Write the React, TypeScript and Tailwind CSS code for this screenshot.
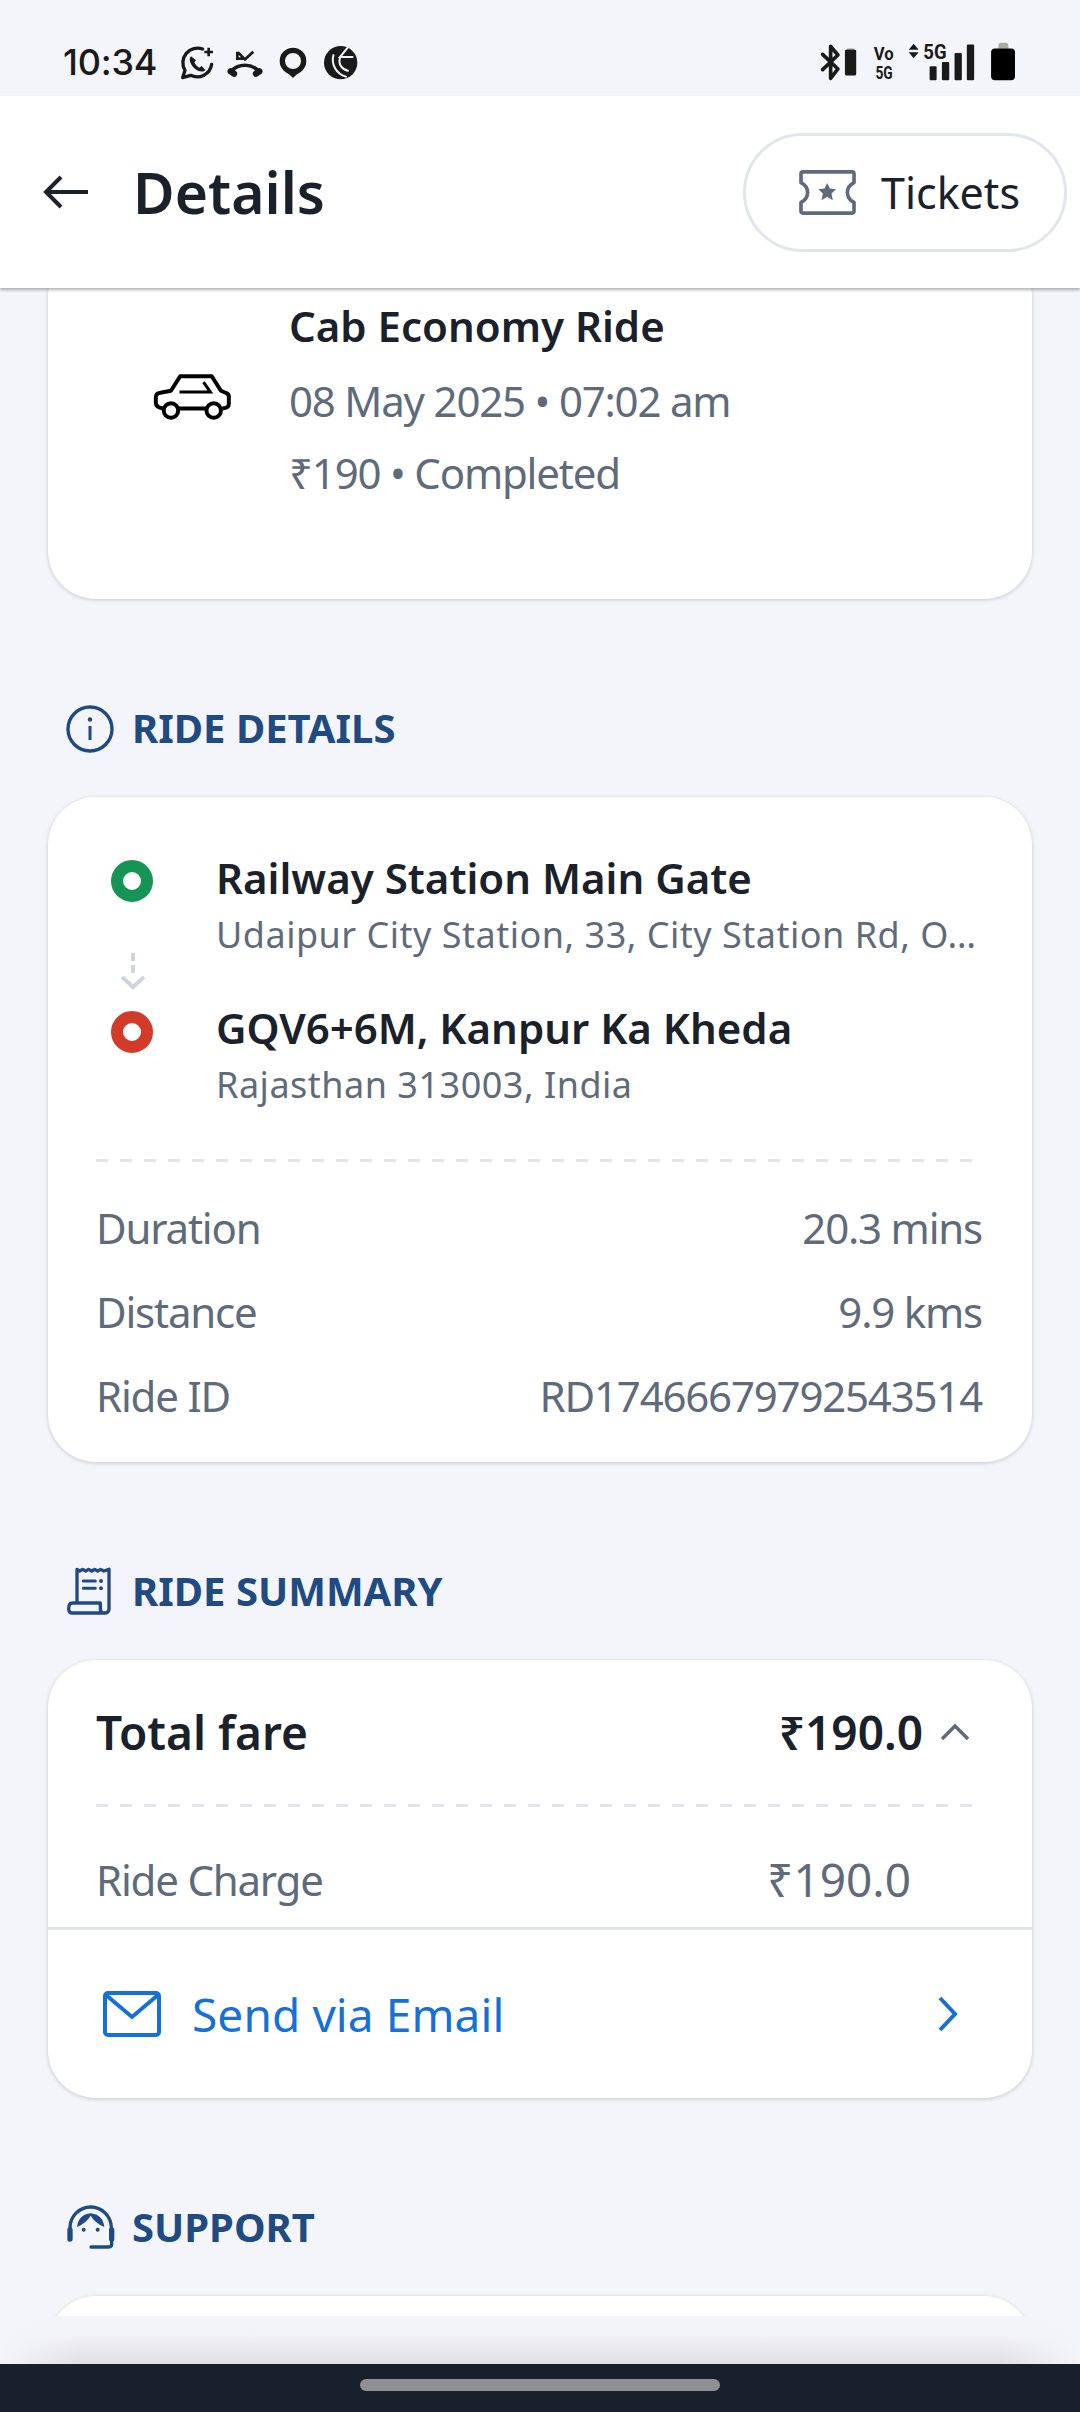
const NAVY = "#1f4b82";

function NotificationIcons() {
    return (
        <svg width="184" height="42" viewBox="420 60 552 126" fill="none" className="ml-[21px]">
            {/* whatsapp with plus */}
            <path d="M494 84A44 44 0 0 0 441 148L434 170L458 163A44 44 0 0 0 521 130" stroke="#1a1a1a" strokeWidth="10" strokeLinecap="round" strokeLinejoin="round" />
            <path d="M459 106C452 112 455 128 468 141C481 153 496 155 502 147L491 135L484 140C478 137 472 131 469 124L474 118Z" fill="#1a1a1a" />
            <path d="M512 80V106M499 93H525" stroke="#1a1a1a" strokeWidth="8" />
            {/* missed call */}
            <path d="M580 150C602 127 640 127 662 150" stroke="#1a1a1a" strokeWidth="11" />
            <path d="M578 151L588 158M664 151L654 158" stroke="#1a1a1a" strokeWidth="19" strokeLinecap="round" />
            <path d="M598 92V113H618M600 94L621 115L646 92" stroke="#1a1a1a" strokeWidth="8" />
            {/* pin */}
            <circle cx="765" cy="120" r="32" stroke="#1a1a1a" strokeWidth="16" />
            <path d="M738 145L765 171L792 145Z" fill="#1a1a1a" />
            {/* round badge */}
            <circle cx="908" cy="125" r="50" fill="#1a1a1a" />
            <path d="M932 76L906 108H946M887 100C878 128 893 158 926 168M906 110C900 130 912 146 932 150" stroke="#f4f4fb" strokeWidth="6" />
        </svg>
    );
}

function SystemIcons() {
    return (
        <svg width="196" height="42" viewBox="55 62 590 126" fill="none">
            {/* bluetooth */}
            <path d="M66 102L112 146L90 174V78L112 104L66 148" stroke="#1a1a1a" strokeWidth="11" strokeLinecap="round" strokeLinejoin="round" />
            <path d="M140 87H160V84H140Z" fill="#a8a8a8" />
            <rect x="133" y="87" width="34" height="79" rx="5" fill="#1a1a1a" />
            <text x="220" y="120" fontFamily="Roboto, sans-serif" fontWeight="700" fontSize="56" fill="#1a1a1a" textLength="60" lengthAdjust="spacingAndGlyphs">Vo</text>
            <text x="225" y="175" fontFamily="Roboto, sans-serif" fontWeight="700" fontSize="56" fill="#1a1a1a" textLength="52" lengthAdjust="spacingAndGlyphs">5G</text>
            <path d="M340 70L355 88H325ZM340 114L355 96H325Z" fill="#1a1a1a" />
            <text x="369" y="115" fontFamily="Roboto, sans-serif" fontWeight="700" fontSize="62" fill="#1a1a1a" textLength="70" lengthAdjust="spacingAndGlyphs">5G</text>
            <rect x="388" y="138" width="21" height="42" rx="3" fill="#1a1a1a" />
            <rect x="425" y="125" width="22" height="55" rx="3" fill="#1a1a1a" />
            <rect x="463" y="98" width="22" height="82" rx="3" fill="#1a1a1a" />
            <rect x="500" y="72" width="22" height="108" rx="3" fill="#1a1a1a" />
            <path d="M595 85V76Q595 67 604 67H616Q625 67 625 76V85Z" fill="#a8a8a8" />
            <rect x="573" y="84" width="72" height="96" rx="12" fill="#000000" />
        </svg>
    );
}

function TicketIcon() {
    return (
        <svg width="61" height="49" viewBox="80 52 184 146" fill="none">
            <path d="M98 63H246Q252 63 252 69V95Q232 105 232 125Q232 145 252 155V181Q252 187 246 187H98Q92 187 92 181V155Q112 145 112 125Q112 105 92 95V69Q92 63 98 63Z" stroke="#5f6b7a" strokeWidth="11" strokeLinejoin="round" />
            <path d="M171 96L179 113L198 115L184 128L188 148L171 138L154 148L158 128L144 115L163 113Z" fill="#5f6b7a" />
        </svg>
    );
}

function CarIcon() {
    return (
        <svg width="78" height="48" viewBox="66 70 236 146" fill="none">
            <path d="M97 178Q74 176 74 160V144Q74 132 88 130L120 124L148 80H244L272 124L286 130Q298 134 296 146V164Q296 176 276 178M142 178H226" stroke="#000" strokeWidth="12" strokeLinejoin="round" />
            <circle cx="120" cy="184" r="22" stroke="#000" strokeWidth="12" />
            <circle cx="250" cy="184" r="22" stroke="#000" strokeWidth="12" />
            <path d="M146 128H240L219 98" stroke="#000" strokeWidth="9" />
        </svg>
    );
}

function InfoIcon() {
    return (
        <svg width="48" height="48" viewBox="0 0 48 48" fill="none">
            <circle cx="24" cy="24" r="22" stroke={NAVY} strokeWidth="3.4" />
            <circle cx="24" cy="14.5" r="2.2" fill={NAVY} />
            <path d="M24 21V35" stroke={NAVY} strokeWidth="3" />
        </svg>
    );
}

function ReceiptIcon() {
    return (
        <svg width="48" height="50" viewBox="52 30 144 150" fill="none">
            <path d="M85 135V37L93 42L102 37L111 42L120 37L129 42L138 37L147 42L156 37L165 42L181 37V155Q181 168 166 168" stroke={NAVY} strokeWidth="10" strokeLinejoin="round" />
            <path d="M72 138H155V155Q155 168 166 168H72Q60 168 60 155Q60 138 72 138Z" stroke={NAVY} strokeWidth="10" strokeLinejoin="round" />
            <path d="M104 72H140M104 94H140" stroke={NAVY} strokeWidth="9" strokeLinecap="round" />
            <circle cx="157" cy="72" r="6" fill={NAVY} />
            <circle cx="157" cy="94" r="6" fill={NAVY} />
        </svg>
    );
}

function SupportIcon() {
    return (
        <svg width="50" height="46" viewBox="46 82 150 138" fill="none">
            <path d="M58 165V150A62 62 0 0 1 182 150V165" stroke={NAVY} strokeWidth="10" />
            <path d="M58 157V184M183 157V184" stroke={NAVY} strokeWidth="16" strokeLinecap="round" />
            <path d="M183 184V200Q183 208 174 208H121" stroke={NAVY} strokeWidth="10" strokeLinecap="round" />
            <path d="M79 148Q84 110 120 107Q156 110 161 148Q134 137 120 114Q106 137 79 148Z" fill={NAVY} />
            <circle cx="99" cy="156" r="6" fill={NAVY} />
            <circle cx="141" cy="156" r="6" fill={NAVY} />
        </svg>
    );
}

function MailIcon() {
    return (
        <svg width="58" height="46" viewBox="0 0 58 46" fill="none">
            <rect x="2" y="2" width="54" height="42" rx="3" stroke="#1570d8" strokeWidth="4" />
            <path d="M3 4L29 26L55 4" stroke="#1570d8" strokeWidth="4" />
        </svg>
    );
}

function Dot({ color }: { color: string }) {
    return (
        <svg width="42" height="42" viewBox="0 0 42 42" className="shrink-0">
            <circle cx="21" cy="21" r="15" fill="none" stroke={color} strokeWidth="12" />
        </svg>
    );
}

function DashedLine() {
    return <div className="mx-[48px] h-[3px] bg-[repeating-linear-gradient(90deg,#e2e6ea_0_12px,transparent_12px_24px)]" />;
}

function SectionTitle({ icon, label }: { icon: React.ReactNode; label: string }) {
    return (
        <div className="mt-[106px] mb-[44px] flex h-[48px] items-center px-[66px]">
            <div className="flex w-[66px] shrink-0 items-center">{icon}</div>
            <span className="pb-[3px] text-[40px] font-bold leading-none text-[#1f4b82]">{label}</span>
        </div>
    );
}

function Row({ label, value }: { label: string; value: string }) {
    return (
        <div className="flex h-[84px] items-center justify-between text-[42px] tracking-[-1.2px] text-[#5f6b7a]">
            <span>{label}</span>
            <span>{value}</span>
        </div>
    );
}

export default function App() {
    return (
        <div className="flex h-[2412px] w-[1080px] flex-col overflow-hidden bg-[#f4f4fb] font-['Noto_Sans',sans-serif]">
            {/* Status bar */}
            <div className="flex h-[96px] shrink-0 items-center justify-between pl-[63px] pr-[65px] pt-[27px]">
                <div className="flex items-center">
                    <span className="font-['Inter',sans-serif] text-[36px] font-medium leading-none tracking-[-0.2px] text-[#1a1a1a]">10:34</span>
                    <NotificationIcons />
                </div>
                <SystemIcons />
            </div>

            {/* Header */}
            <div className="relative z-10 flex h-[192px] shrink-0 items-center justify-between bg-white pl-[43px] pr-[13px] shadow-[0_2px_3px_rgba(0,0,0,0.3)]">
                <div className="flex items-center">
                    <svg width="46" height="34" viewBox="0 0 46 34" fill="none">
                        <path d="M45 17H3M18 2L3 17L18 32" stroke="#1a212b" strokeWidth="4" />
                    </svg>
                    <h1 className="ml-[44px] text-[57px] font-semibold leading-none text-[#1a212b]">Details</h1>
                </div>
                <div className="flex h-[119px] w-[324px] items-center rounded-full border-[3px] border-[#e2e6ea] pl-[51px]">
                    <TicketIcon />
                    <span className="ml-[23px] text-[43px] leading-none text-[#1a212b]">Tickets</span>
                </div>
            </div>

            {/* Scrolling content */}
            <div className="relative flex-1 overflow-hidden">
                <div className="-mt-[40px]">
                    {/* Ride card */}
                    <div className="mx-[48px] flex h-[351px] rounded-[48px] bg-white pl-[105px] pt-[43px] shadow-[0_1px_4px_rgba(0,0,0,0.18)]">
                        <div className="flex h-[212px] items-center">
                            <CarIcon />
                        </div>
                        <div className="ml-[58px] text-[42px] leading-[73px] tracking-[-1.2px] text-[#5f6b7a]">
                            <div className="mb-[4px] text-[42px] font-semibold leading-[69px] tracking-normal text-[#1a212b]">Cab Economy Ride</div>
                            <div>08 May 2025 • 07:02 am</div>
                            <div className="leading-[71px]">₹190 • Completed</div>
                        </div>
                    </div>

                    <SectionTitle icon={<InfoIcon />} label="RIDE DETAILS" />

                    {/* Ride details card */}
                    <div className="mx-[48px] rounded-[48px] bg-white pb-[25px] pt-[51px] shadow-[0_1px_4px_rgba(0,0,0,0.18)]">
                        <div className="flex pl-[63px]">
                            <div className="flex w-[42px] shrink-0 flex-col items-center pt-[12px]">
                                <Dot color="#169453" />
                                <svg width="26" height="38" viewBox="0 0 26 38" fill="none" className="ml-[2px] mt-[51px]">
                                    <path d="M13 0V8M13 12V20" stroke="#cfd5de" strokeWidth="4" />
                                    <path d="M2 24L13 34L24 24" stroke="#cfd5de" strokeWidth="4" />
                                </svg>
                                <div className="mt-[20px]">
                                    <Dot color="#d23b29" />
                                </div>
                            </div>
                            <div className="ml-[63px]">
                                <div className="text-[42px] font-semibold leading-[60px] text-[#1a212b]">Railway Station Main Gate</div>
                                <div className="text-[36px] leading-[54px] tracking-[0.5px] text-[#5f6b7a]">Udaipur City Station, 33, City Station Rd, O…</div>
                                <div className="mt-[36px] text-[42px] font-semibold leading-[60px] text-[#1a212b]">GQV6+6M, Kanpur Ka Kheda</div>
                                <div className="text-[36px] leading-[54px] tracking-[0.5px] text-[#5f6b7a]">Rajasthan 313003, India</div>
                            </div>
                        </div>
                        <div className="mt-[47px]">
                            <DashedLine />
                        </div>
                        <div className="mt-[23px] pl-[48px] pr-[50px]">
                            <Row label="Duration" value="20.3 mins" />
                            <Row label="Distance" value="9.9 kms" />
                            <Row label="Ride ID" value="RD17466679792543514" />
                        </div>
                    </div>

                    <SectionTitle icon={<ReceiptIcon />} label="RIDE SUMMARY" />

                    {/* Ride summary card */}
                    <div className="mx-[48px] overflow-hidden rounded-[48px] bg-white shadow-[0_1px_4px_rgba(0,0,0,0.18)]">
                        <div className="flex h-[144px] items-center justify-between pl-[48px] pr-[62px] text-[46px] font-semibold text-[#1a212b]">
                            <span>Total fare</span>
                            <div className="flex items-center">
                                <span>₹190.0</span>
                                <svg width="30" height="18" viewBox="0 0 30 18" fill="none" className="ml-[17px]">
                                    <path d="M2 16L15 3L28 16" stroke="#5f6b7a" strokeWidth="3.4" />
                                </svg>
                            </div>
                        </div>
                        <DashedLine />
                        <div className="mt-[30px] flex h-[84px] items-center justify-between pl-[48px] pr-[121px] text-[42px] tracking-[-1.2px] text-[#5f6b7a]">
                            <span>Ride Charge</span>
                            <span className="text-[46px] tracking-normal">₹190.0</span>
                        </div>
                        <div className="mt-[6px] h-[3px] bg-[#e2e6ea]" />
                        <div className="flex h-[168px] items-center justify-between pl-[55px] pr-[73px]">
                            <div className="flex items-center">
                                <MailIcon />
                                <span className="ml-[31px] text-[46px] tracking-[0.1px] text-[#1570d8]">Send via Email</span>
                            </div>
                            <svg width="22" height="36" viewBox="0 0 22 36" fill="none">
                                <path d="M3 2L18 18L3 34" stroke="#1570d8" strokeWidth="4" />
                            </svg>
                        </div>
                    </div>

                    <SectionTitle icon={<SupportIcon />} label="SUPPORT" />

                    {/* Next card, cut off by the fade */}
                    <div className="mx-[48px] h-[200px] rounded-[48px] bg-white shadow-[0_1px_4px_rgba(0,0,0,0.18)]" />
                </div>

                {/* Bottom fade */}
                <div className="absolute inset-x-0 bottom-0 flex h-[48px] justify-between bg-[linear-gradient(#f4f4fb_0%,#f2f2f8_40%,#dfdfe5_100%)]">
                    <div className="w-[80px] bg-[linear-gradient(90deg,#f4f4fb,transparent)]" />
                    <div className="w-[80px] bg-[linear-gradient(270deg,#f4f4fb,transparent)]" />
                </div>
            </div>

            {/* Nav bar */}
            <div className="flex h-[48px] shrink-0 justify-center bg-[#18202b] pt-[15px]">
                <div className="h-[12px] w-[360px] rounded-full bg-[#8e9094]" />
            </div>
        </div>
    );
}
